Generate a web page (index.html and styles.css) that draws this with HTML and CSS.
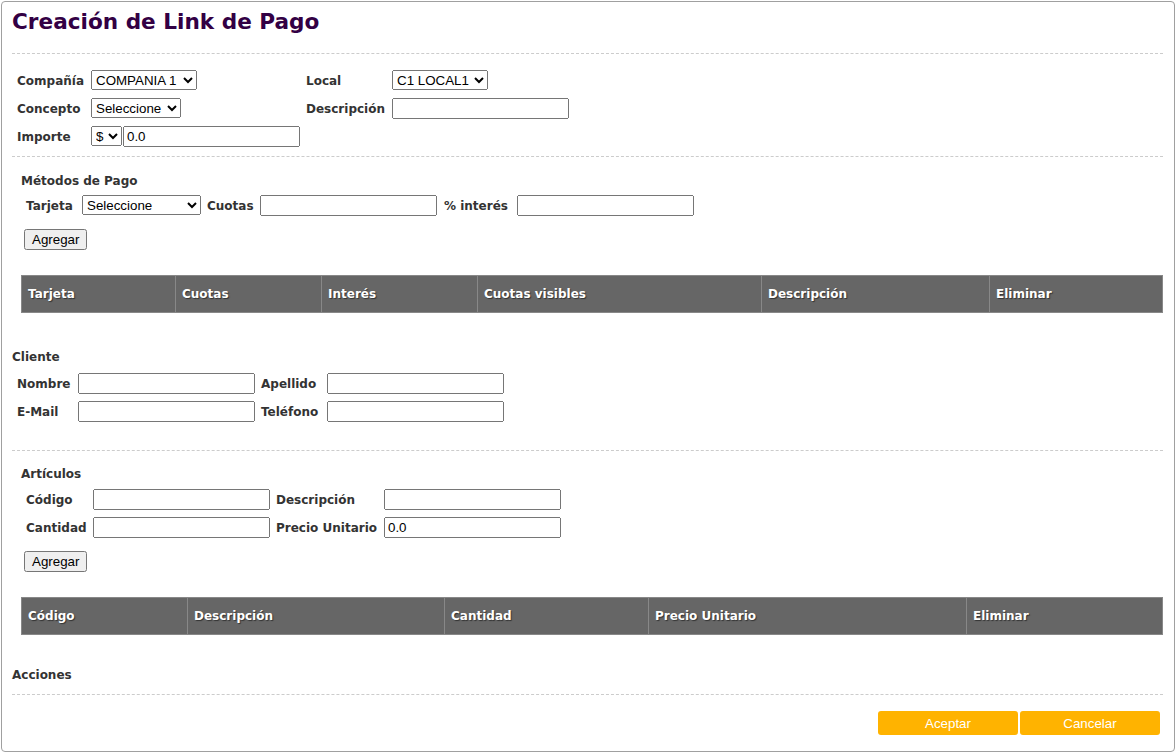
FILE: index.html
```html
<!DOCTYPE html>
<html lang="es">
<head>
<meta charset="utf-8">
<title>Creación de Link de Pago</title>
<link rel="stylesheet" href="styles.css">
</head>
<body>
<div class="page">
  <h1 class="title">Creación de Link de Pago</h1>
  <div class="sep sep-1"></div>

  <div class="grid grid-main">
    <label>Compañía</label>
    <div><select class="sel-comp"><option>COMPANIA 1</option></select></div>
    <label>Local</label>
    <div><select class="sel-local"><option>C1 LOCAL1</option></select></div>

    <label>Concepto</label>
    <div><select class="sel-concepto"><option>Seleccione</option></select></div>
    <label>Descripción</label>
    <div><input type="text" class="txt"></div>

    <label>Importe</label>
    <div class="pair"><select class="sel-mon"><option>$</option></select><input type="text" class="txt" value="0.0"></div>
    <span></span>
    <span></span>
  </div>
  <div class="sep sep-2"></div>

  <div class="block block-pagos">
    <h2 class="heading">Métodos de Pago</h2>
    <div class="inline-row">
      <label class="lb-tarjeta">Tarjeta</label>
      <select class="sel-tarjeta"><option>Seleccione</option></select>
      <label class="lb-cuotas">Cuotas</label>
      <input type="text" class="txt">
      <label class="lb-interes">% interés</label>
      <input type="text" class="txt">
    </div>
    <button class="btn-add" type="button">Agregar</button>
    <table class="list list-pagos">
      <colgroup><col style="width:154px"><col style="width:146px"><col style="width:156px"><col style="width:284px"><col style="width:228px"><col></colgroup>
      <thead><tr><th>Tarjeta</th><th>Cuotas</th><th>Interés</th><th>Cuotas visibles</th><th>Descripción</th><th>Eliminar</th></tr></thead>
    </table>
  </div>

  <h2 class="heading heading-cliente">Cliente</h2>
  <div class="grid grid-cliente">
    <label>Nombre</label>
    <div><input type="text" class="txt"></div>
    <label>Apellido</label>
    <div><input type="text" class="txt"></div>
    <label>E-Mail</label>
    <div><input type="text" class="txt"></div>
    <label>Teléfono</label>
    <div><input type="text" class="txt"></div>
  </div>
  <div class="sep sep-3"></div>

  <div class="block block-art">
    <h2 class="heading">Artículos</h2>
    <div class="grid grid-art">
      <label>Código</label>
      <div><input type="text" class="txt"></div>
      <label>Descripción</label>
      <div><input type="text" class="txt"></div>
      <label>Cantidad</label>
      <div><input type="text" class="txt"></div>
      <label>Precio Unitario</label>
      <div><input type="text" class="txt" value="0.0"></div>
    </div>
    <button class="btn-add" type="button">Agregar</button>
    <table class="list list-art">
      <colgroup><col style="width:166px"><col style="width:257px"><col style="width:204px"><col style="width:318px"><col></colgroup>
      <thead><tr><th>Código</th><th>Descripción</th><th>Cantidad</th><th>Precio Unitario</th><th>Eliminar</th></tr></thead>
    </table>
  </div>

  <h2 class="heading heading-acciones">Acciones</h2>
  <div class="sep sep-4"></div>
  <div class="actions">
    <button class="btn-main" type="button">Aceptar</button>
    <button class="btn-main" type="button">Cancelar</button>
  </div>
</div>
</body>
</html>
```

FILE: styles.css
```css
html, body {
  margin: 0;
  padding: 0;
  background: #ffffff;
}

body {
  font-family: "DejaVu Sans", Verdana, sans-serif;
  color: #333333;
}

.page {
  box-sizing: border-box;
  margin: 1px 0 0 1px;
  width: 1174px;
  height: 751px;
  border: 1px solid #a0a0a0;
  border-radius: 4px;
  padding: 7px 11px 0 10px;
}

.title {
  margin: 0;
  font-size: 21.6px;
  line-height: 26px;
  font-weight: bold;
  color: #330044;
}

.sep {
  height: 0;
  border-top: 1px dashed #cccccc;
}
.sep-1 { margin-top: 18px; }
.sep-2 { margin-top: 6px; }
.sep-3 { margin-top: 25px; }
.sep-4 { margin-top: 11px; }

label {
  font-size: 12px;
  font-weight: bold;
  color: #333333;
  white-space: nowrap;
  padding-top: 2px;
}

.grid {
  display: grid;
  grid-auto-rows: 28px;
  align-items: center;
}
.grid > div {
  display: flex;
  align-items: center;
}

.grid-main {
  padding: 12px 0 0 5px;
  grid-template-columns: 74px 215px 86px auto;
}

.grid-cliente {
  margin-top: 4px;
  padding-left: 5px;
  grid-template-columns: 61px 183px 66px auto;
}

.grid-art {
  margin-top: 3px;
  padding-left: 5px;
  grid-template-columns: 67px 183px 108px auto;
}

select, input, button {
  font-family: "Liberation Sans", Arial, sans-serif;
  font-size: 13.33px;
}

select {
  box-sizing: border-box;
  height: 20px;
  margin: 0;
}

.sel-comp { width: 106px; }
.sel-local { width: 96px; }
.sel-concepto { width: 90px; }
.sel-mon { width: 31px; }
.sel-tarjeta { width: 119px; }

.txt {
  box-sizing: border-box;
  width: 177px;
  height: 21px;
  margin: 0;
  padding: 1px 2px;
}

.pair {
  gap: 1px;
}

.block {
  padding-left: 9px;
}

.heading {
  margin: 0;
  font-size: 12px;
  line-height: 16px;
  font-weight: bold;
  color: #333333;
}

.block-pagos .heading { margin-top: 16px; }

.inline-row {
  margin-top: 2px;
  padding-left: 5px;
  height: 28px;
  display: flex;
  align-items: center;
  gap: 6px;
}

.lb-tarjeta { width: 50px; }
.lb-cuotas { width: 47px; }
.lb-interes { width: 67px; margin-left: 1px; }

.btn-add {
  display: block;
  margin: 10px 0 0 3px;
  height: 21px;
  padding: 1px 6px;
}

.list {
  margin-top: 25px;
  width: 1142px;
  border-collapse: collapse;
  table-layout: fixed;
}

.list th {
  height: 36px;
  padding: 0 6px;
  background: #666666;
  border: 1px solid #888888;
  color: #ffffff;
  font-size: 12px;
  font-weight: bold;
  text-align: left;
  text-shadow: 1px 1px 1px #333333;
  white-space: nowrap;
}

.heading-cliente { margin-top: 36px; }
.block-art .heading { margin-top: 15px; }
.heading-acciones { margin-top: 32px; }

.actions {
  margin-top: 16px;
  display: flex;
  justify-content: flex-end;
  gap: 2px;
  padding-right: 3px;
}

.btn-main {
  width: 140px;
  height: 24px;
  border: none;
  border-radius: 3px;
  background: #ffb300;
  color: #ffffff;
  padding: 0;
}
```
